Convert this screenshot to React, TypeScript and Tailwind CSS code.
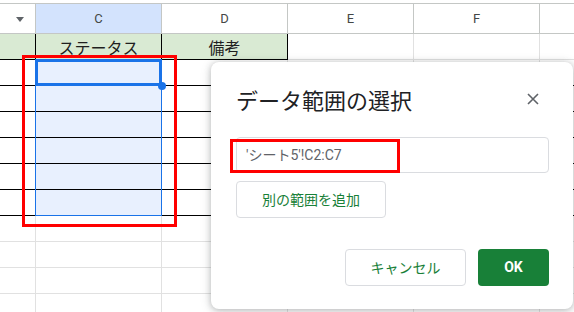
import React from "react";

const JP = "font-['Noto_Sans_CJK_JP','Noto_Sans',sans-serif]";
const LATIN = "font-['Roboto','Liberation_Sans','Noto_Sans_CJK_JP',sans-serif]";

const colWidths = ["w-[36px]", "w-[126px]", "w-[126px]", "w-[126px]", "w-[126px]", "w-[126px]", "w-[40px]"];

function HeaderRow() {
  const labels = ["", "C", "D", "E", "F", "", ""];
  return (
    <div className="flex h-[31px] border-y border-[#c4c7c5]">
      {labels.map((l, i) => (
        <div
          key={i}
          className={`${colWidths[i]} shrink-0 border-r border-[#c4c7c5] flex items-center justify-center text-[13px] text-[#444746] ${LATIN} ${
            i === 1 ? "bg-[#d3e3fd] text-[#0b1f4a]" : "bg-white"
          }`}
        >
          {i === 0 ? (
            <svg width="8" height="5" viewBox="0 0 8 5" className="ml-[5px] mt-[1px]">
              <path d="M0 0H8L4 5Z" fill="#5f6368" />
            </svg>
          ) : (
            l
          )}
        </div>
      ))}
    </div>
  );
}

function TitleRow() {
  const cells = ["", "ステータス", "備考", "", "", "", ""];
  return (
    <div className="flex h-[26px]">
      {cells.map((t, i) => (
        <div
          key={i}
          className={`${colWidths[i]} shrink-0 flex items-center justify-center text-[16px] text-[#1f1f1f] ${JP} ${
            i < 3
              ? "bg-[#d9ead3] border-r border-b border-black"
              : "bg-white border-r border-b border-[#e1e1e1]"
          }`}
        >
          {t}
        </div>
      ))}
    </div>
  );
}

function DataRow({ boxed }: { boxed: boolean }) {
  return (
    <div className={`flex h-[26px] border-b ${boxed ? "border-black" : "border-[#e1e1e1]"}`}>
      {colWidths.map((w, i) => (
        <div
          key={i}
          className={`${w} shrink-0 border-r border-[#e1e1e1] ${boxed && i === 1 ? "bg-[#e8f0fe]" : "bg-white"}`}
        />
      ))}
    </div>
  );
}

export default function App() {
  return (
    <div className="relative w-[574px] h-[312px] overflow-hidden bg-white">
      {/* sheet grid */}
      <div className="pt-[3px]">
        <HeaderRow />
        <TitleRow />
        {[0, 1, 2, 3, 4, 5].map((r) => (
          <DataRow key={r} boxed />
        ))}
        {[0, 1, 2, 3].map((r) => (
          <DataRow key={"e" + r} boxed={false} />
        ))}
      </div>

      {/* selection range C2:C7 */}
      <div className="absolute left-[35px] top-[59px] w-[127px] h-[157px] border border-[#1a73e8]" />
      <div className="absolute left-[35px] top-[59px] w-[127px] h-[27px] border-[3px] border-[#1a73e8]" />
      <div className="absolute left-[158px] top-[82px] w-[8px] h-[8px] rounded-full bg-[#1a73e8]" />

      {/* annotation around the range */}
      <div className="absolute left-[22px] top-[55px] w-[155px] h-[172px] border-[3px] border-[#ff0000]" />

      {/* dialog */}
      <div className="absolute left-[211px] top-[62px] w-[362px] h-[247px] bg-white rounded-[8px] shadow-[0_1px_6px_rgba(60,64,67,0.3),0_2px_12px_rgba(60,64,67,0.15)] pl-[25px] pr-[24px] pt-[22px] flex flex-col">
        <div className="flex items-center justify-between h-[30px]">
          <span className={`text-[22px] text-[#202124] ${JP}`}>データ範囲の選択</span>
          <svg width="12" height="12" viewBox="0 0 12 12" className="mr-[10px]">
            <path d="M1 1L11 11M11 1L1 11" stroke="#5f6368" strokeWidth="1.6" />
          </svg>
        </div>
        <div className="mt-[23px] h-[36px] border border-[#dadce0] rounded-[4px] flex items-center pl-[9px]">
          <span className={`text-[14px] text-[#5f6368] ${LATIN}`}>'シート5'!C2:C7</span>
        </div>
        <button className={`mt-[8px] w-[150px] h-[37px] border border-[#dadce0] rounded-[4px] text-[14px] text-[#188038] bg-white ${JP}`}>
          別の範囲を追加
        </button>
        <div className="mt-[31px] flex justify-end gap-[12px]">
          <button className={`w-[121px] h-[37px] border border-[#dadce0] rounded-[4px] text-[14px] text-[#188038] bg-white ${JP}`}>
            キャンセル
          </button>
          <button className={`w-[71px] h-[37px] rounded-[4px] text-[14px] font-bold text-white bg-[#188038] ${LATIN}`}>
            OK
          </button>
        </div>
      </div>

      {/* annotation around the input */}
      <div className="absolute left-[230px] top-[139px] w-[170px] h-[34px] border-[3px] border-[#ff0000]" />
    </div>
  );
}
